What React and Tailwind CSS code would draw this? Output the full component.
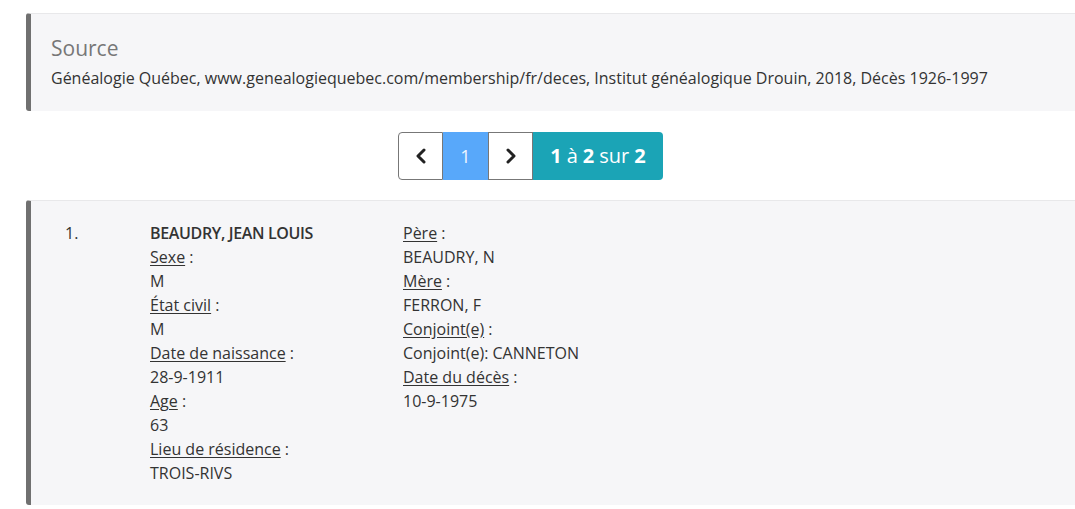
const font = { fontFamily: '"Open Sans", "Noto Sans", sans-serif' };

function Chevron({ dir }) {
  return (
    <svg width="14" height="16" viewBox="0 0 14 16" fill="none">
      <path
        d={dir === "left" ? "M10 2 L4 8 L10 14" : "M4 2 L10 8 L4 14"}
        stroke="#222"
        strokeWidth="3"
        strokeLinecap="round"
        strokeLinejoin="round"
      />
    </svg>
  );
}

function Field({ label, value }) {
  return (
    <>
      <div>
        <span className="underline underline-offset-2">{label}</span> :
      </div>
      <div>{value}</div>
    </>
  );
}

export default function App() {
  return (
    <div className="min-h-[509px] bg-white pl-[26px] pt-[13px] text-[16px] leading-[24px] text-[#333]" style={font}>
      <div className="rounded-l-[3px] border-l-[5px] border-t border-l-[#707070] border-t-[#e8e8ea] bg-[#f6f6f8] pb-[21px] pl-[20px] pt-[22px]">
        <h2 className="mb-[6px] text-[21px] leading-[24px] text-[#777]">Source</h2>
        <p className="text-[16px] text-[#333]">
          Généalogie Québec, www.genealogiequebec.com/membership/fr/deces, Institut généalogique Drouin, 2018, Décès 1926-1997
        </p>
      </div>

      <div className="flex justify-center pr-[40px] pt-[21px] pb-[20px]">
        <div className="flex h-[48px] text-[18px]">
          <button className="flex w-[45px] items-center justify-center rounded-l-[4px] border border-[#777] bg-white">
            <Chevron dir="left" />
          </button>
          <button className="flex w-[45px] items-center justify-center bg-[#58a8fa] text-[#eef5ff]">1</button>
          <button className="flex w-[45px] items-center justify-center border border-[#777] bg-white">
            <Chevron dir="right" />
          </button>
          <div className="flex w-[130px] items-center justify-center rounded-r-[4px] bg-[#1ba4b6] text-[20px] text-white">
            <span className="font-bold">1</span>
            <span className="ml-[5px]">à</span>
            <span className="ml-[5px] font-bold">2</span>
            <span className="ml-[5px]">sur</span>
            <span className="ml-[5px] font-bold">2</span>
          </div>
        </div>
      </div>

      <div className="flex rounded-l-[3px] border-l-[5px] border-t border-l-[#707070] border-t-[#e8e8ea] bg-[#f6f6f8] pb-[20px] pl-[34px] pt-[20px]">
        <div className="w-[85px]">1.</div>
        <div className="w-[253px]">
          <div className="font-semibold tracking-[-0.35px]">BEAUDRY, JEAN LOUIS</div>
          <Field label="Sexe" value="M" />
          <Field label="État civil" value="M" />
          <Field label="Date de naissance" value="28-9-1911" />
          <Field label="Age" value="63" />
          <Field label="Lieu de résidence" value="TROIS-RIVS" />
        </div>
        <div>
          <Field label="Père" value="BEAUDRY, N" />
          <Field label="Mère" value="FERRON, F" />
          <Field label="Conjoint(e)" value="Conjoint(e): CANNETON" />
          <Field label="Date du décès" value="10-9-1975" />
        </div>
      </div>
    </div>
  );
}
